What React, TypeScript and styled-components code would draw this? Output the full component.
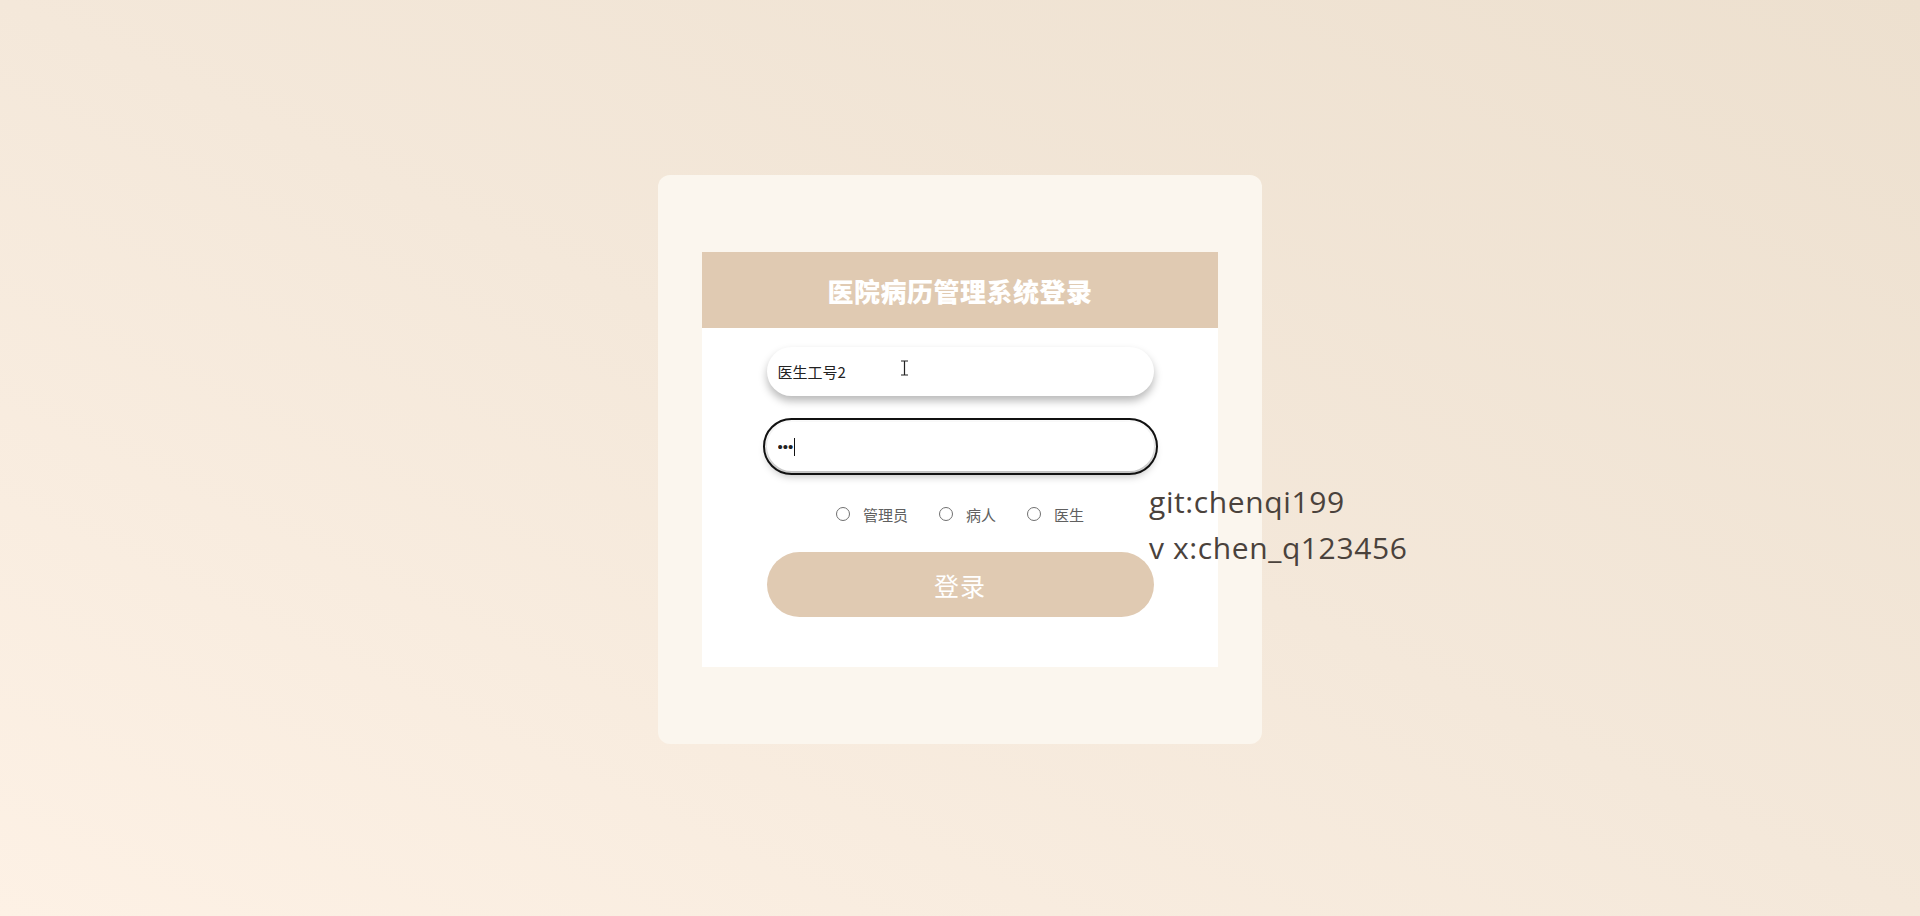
import React, {useState} from 'react';
import styled, {createGlobalStyle} from 'styled-components';

const GlobalStyle = createGlobalStyle`
    html, body {
        margin: 0;
        padding: 0;
        height: 100%;
    }
    body {
        font-family: "Noto Sans CJK SC", "Noto Sans", sans-serif;
    }
    * {
        box-sizing: border-box;
    }
`;

const roles = [
    {value: 'admin', label: '管理员'},
    {value: 'patient', label: '病人'},
    {value: 'doctor', label: '医生'},
];

const App = () => {
    const [account, setAccount] = useState('医生工号2');
    const [password, setPassword] = useState('123');
    const [role, setRole] = useState('');

    return (
        <Page>
            <GlobalStyle />
            <Card>
                <Panel>
                    <Header>
                        <Title>医院病历管理系统登录</Title>
                    </Header>
                    <Field>
                        <TextInput
                            value={account}
                            onChange={(e) => setAccount(e.target.value)}
                            placeholder="请输入工号"
                        />
                        <Cursor width="9" height="16" viewBox="0 0 9 16">
                            <path d="M1 1h7M4.5 1v14M1 15h7" stroke="#222" strokeWidth="1.2" fill="none" />
                        </Cursor>
                    </Field>
                    <Field $gap={26}>
                        <TextInput
                            type="password"
                            $active
                            value={password}
                            onChange={(e) => setPassword(e.target.value)}
                            placeholder="请输入密码"
                        />
                        <Caret />
                    </Field>
                    <RoleRow>
                        {roles.map((r) => (
                            <RoleItem key={r.value}>
                                <Radio
                                    type="radio"
                                    name="role"
                                    checked={role === r.value}
                                    onChange={() => setRole(r.value)}
                                />
                                {r.label}
                            </RoleItem>
                        ))}
                    </RoleRow>
                    <LoginButton>登录</LoginButton>
                </Panel>
                <Note>
                    <div>git:chenqi199</div>
                    <div>v x:chen_q123456</div>
                </Note>
            </Card>
        </Page>
    );
};

const Page = styled.div`
    min-height: 100vh;
    display: flex;
    align-items: center;
    justify-content: center;
    padding-top: 3px;
    background: linear-gradient(to bottom left, #ede0cf 0%, #f4e8da 50%, #fdf1e5 100%);
`;

const Card = styled.div`
    position: relative;
    width: 604px;
    padding: 77px 44px;
    background-color: #fbf6ee;
    border-radius: 12px;
`;

const Panel = styled.div`
    width: 516px;
    height: 415px;
    background-color: #fff;
    display: flex;
    flex-direction: column;
    align-items: center;
`;

const Header = styled.div`
    width: 100%;
    height: 76px;
    background-color: #e0cab2;
    display: flex;
    align-items: center;
    justify-content: center;
    padding-top: 1px;
`;

const Title = styled.h1`
    margin: 0;
    font-size: 26px;
    font-weight: 900;
    letter-spacing: 0.5px;
    color: #fff;
`;

const Field = styled.div<{$gap?: number}>`
    position: relative;
    width: 75%;
    margin-top: ${(p) => p.$gap ?? 19}px;
`;

const TextInput = styled.input<{$active?: boolean}>`
    display: block;
    width: 100%;
    height: 49px;
    padding: 0 11px;
    border: none;
    border-radius: 25px;
    background-color: #fff;
    font-family: ${(p) =>
        p.$active ? '"Liberation Sans", Arial, sans-serif' : '"Noto Sans CJK SC", "Noto Sans", sans-serif'};
    font-size: 15px;
    color: #222;
    box-shadow: 0 5px 9px rgba(0, 0, 0, 0.28);
    outline: ${(p) => (p.$active ? '2px solid #111' : 'none')};
    outline-offset: 2px;
    &:focus {
        outline: 2px solid #111;
    }
`;

const Cursor = styled.svg`
    position: absolute;
    left: 133px;
    top: 13px;
    pointer-events: none;
`;

const Caret = styled.span`
    position: absolute;
    left: 27px;
    top: 16px;
    width: 1px;
    height: 18px;
    background-color: #111;
    pointer-events: none;
`;

const RoleRow = styled.div`
    display: flex;
    align-items: center;
    gap: 31px;
    height: 20px;
    margin: 33px 0 28px;
`;

const RoleItem = styled.label`
    display: flex;
    align-items: center;
    gap: 13px;
    font-size: 15px;
    color: #606060;
    cursor: pointer;
`;

const Radio = styled.input`
    appearance: none;
    width: 14px;
    height: 14px;
    margin: 0;
    border: 1px solid #707070;
    border-radius: 50%;
    background-color: #fff;
    cursor: pointer;
    &:checked {
        border: 4px solid #e0cab2;
    }
`;

const LoginButton = styled.button`
    width: 75%;
    height: 65px;
    border: none;
    border-radius: 33px;
    background-color: #e0cab2;
    color: #fff;
    font-family: "Noto Sans CJK SC", "Noto Sans", sans-serif;
    font-size: 25px;
    letter-spacing: 1px;
    cursor: pointer;
`;

const Note = styled.div`
    position: absolute;
    left: 491px;
    top: 304px;
    font-family: "Open Sans", "Noto Sans", sans-serif;
    font-size: 30px;
    line-height: 46px;
    letter-spacing: 0.6px;
    color: #4a423c;
    white-space: nowrap;
`;

export default App;
